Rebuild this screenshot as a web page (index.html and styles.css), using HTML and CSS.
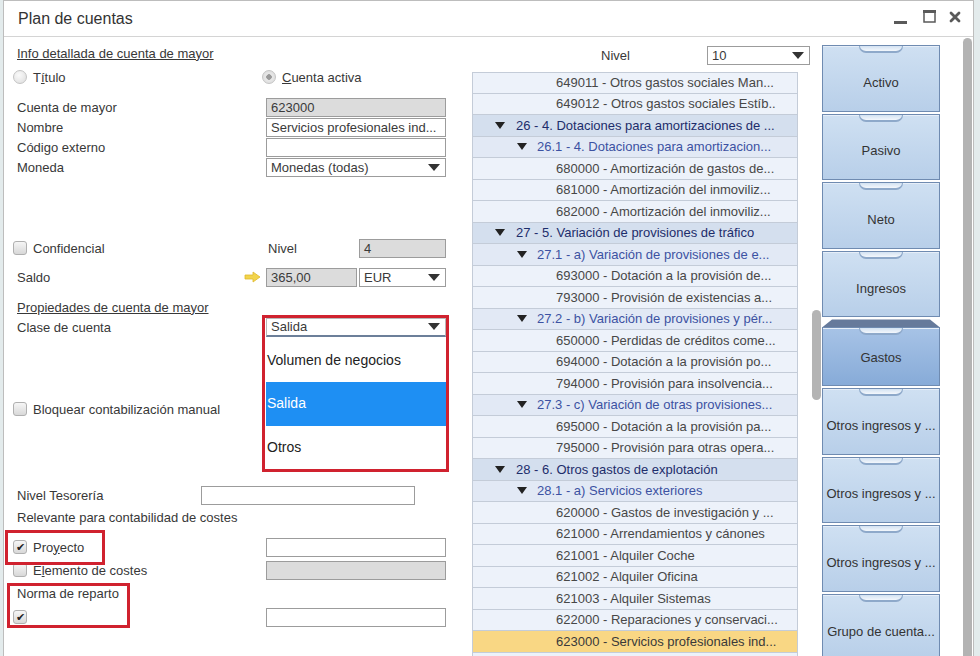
FILE: index.html
```html
<!DOCTYPE html>
<html lang="es">
<head>
    <meta charset="UTF-8">
    <title>Plan de cuentas</title>
    <link rel="stylesheet" href="styles.css">
</head>
<body>
    <div class="window">
        <div class="titlebar">
            <span class="title">Plan de cuentas</span>
            <svg class="winctl" width="80" height="35" viewBox="0 0 80 35">
                <rect x="4" y="20" width="13" height="3" fill="#5a5a5a"/>
                <rect x="34" y="10" width="11" height="11" fill="none" stroke="#5a5a5a" stroke-width="1.5"/>
                <rect x="33" y="9" width="13" height="3" fill="#5a5a5a"/>
                <path d="M61 12 L69 20 M69 12 L61 20" stroke="#5a5a5a" stroke-width="2.8" stroke-linecap="round"/>
            </svg>
        </div>
        <div class="content">
            <!-- formulario izquierdo -->
            <div class="form">
                <div class="row first"><span class="section">Info detallada de cuenta de mayor</span></div>
                <div class="row row-radio">
                    <label class="lbl opt"><span class="radio"></span>T<u>í</u>tulo</label>
                    <label class="opt"><span class="radio on"></span><u>C</u>uenta activa</label>
                </div>
                <div class="row row-account">
                    <span class="lbl">Cuenta de mayor</span>
                    <span class="inp ro">623000</span>
                </div>
                <div class="row">
                    <span class="lbl">Nombre</span>
                    <span class="inp">Servicios profesionales ind...</span>
                </div>
                <div class="row">
                    <span class="lbl">Código externo</span>
                    <span class="inp"></span>
                </div>
                <div class="row">
                    <span class="lbl">Moneda</span>
                    <span class="inp sel">Monedas (todas)<span class="caret"></span></span>
                </div>
                <div class="row row-conf">
                    <label class="lbl opt"><span class="check"></span>Confidencial</label>
                    <span class="sublbl">Nivel</span>
                    <span class="inp ro small">4</span>
                </div>
                <div class="row row-saldo">
                    <span class="lbl saldo-lbl">Saldo
                        <svg class="arrow" width="17" height="12" viewBox="0 0 17 12">
                            <path d="M1 4 H9 V1 L16 6 L9 11 V8 H1 Z" fill="#f2d44c" stroke="#e0b92c" stroke-width="0.8"/>
                        </svg>
                    </span>
                    <span class="inp ro mid">365,00</span>
                    <span class="inp sel small">EUR<span class="caret"></span></span>
                </div>
                <div class="row row-props"><span class="section">Propiedades de cuenta de mayor</span></div>
                <div class="row">
                    <span class="lbl">Clase de cuenta</span>
                    <span class="inp sel focus">Salida<span class="caret"></span>
                        <span class="dropdown">
                            <span class="opt-item">Volumen de negocios</span>
                            <span class="opt-item active">Salida</span>
                            <span class="opt-item">Otros</span>
                        </span>
                    </span>
                </div>
                <div class="row row-lock">
                    <label class="lbl opt"><span class="check"></span>Bloquear contabilización manual</label>
                </div>
                <div class="row row-treas">
                    <span class="lbl narrow">Nivel Tesorería</span>
                    <span class="inp wide"></span>
                </div>
                <div class="row row-rel">
                    <span class="lbl">Relevante para contabilidad de costes</span>
                </div>
                <div class="row row-proj">
                    <label class="lbl opt"><span class="check on">✔</span>Pro<u>y</u>ecto</label>
                    <span class="inp"></span>
                </div>
                <div class="row row-cost">
                    <label class="lbl opt"><span class="check"></span>E<u>l</u>emento de costes</label>
                    <span class="inp ro"></span>
                </div>
                <div class="row row-norm">
                    <span class="lbl">Norma de reparto</span>
                </div>
                <div class="row row-normchk">
                    <label class="lbl opt"><span class="check on">✔</span></label>
                    <span class="inp"></span>
                </div>

                <div class="mark mark-class"></div>
                <div class="mark mark-proj"></div>
                <div class="mark mark-norm"></div>
            </div>

            <!-- árbol de cuentas -->
            <div class="tree">
                <div class="tree-head">
                    <span class="lvl">Nivel</span>
                    <span class="inp sel lvl-sel">10<span class="caret"></span></span>
                </div>
                <div class="tree-body">
                    <div class="rows">
                        <div class="trow top">649011 - Otros gastos sociales Man...</div>
                        <div class="trow">649012 - Otros gastos sociales Estíb..</div>
                        <div class="trow g1"><span class="tri"></span>26 - 4. Dotaciones para amortizaciones de ...</div>
                        <div class="trow g2"><span class="tri"></span>26.1 - 4. Dotaciones para amortizacion...</div>
                        <div class="trow">680000 - Amortización de gastos de...</div>
                        <div class="trow">681000 - Amortización del inmoviliz...</div>
                        <div class="trow">682000 - Amortización del inmoviliz...</div>
                        <div class="trow g1"><span class="tri"></span>27 - 5. Variación de provisiones de tráfico</div>
                        <div class="trow g2"><span class="tri"></span>27.1 - a) Variación de provisiones de e...</div>
                        <div class="trow">693000 - Dotación a la provisión de...</div>
                        <div class="trow">793000 - Provisión de existencias a...</div>
                        <div class="trow g2"><span class="tri"></span>27.2 - b) Variación de provisiones y pér...</div>
                        <div class="trow">650000 - Perdidas de créditos come...</div>
                        <div class="trow">694000 - Dotación a la provisión po...</div>
                        <div class="trow">794000 - Provisión para insolvencia...</div>
                        <div class="trow g2"><span class="tri"></span>27.3 - c) Variación de otras provisiones...</div>
                        <div class="trow">695000 - Dotación a la provisión pa...</div>
                        <div class="trow">795000 - Provisión para otras opera...</div>
                        <div class="trow g1"><span class="tri"></span>28 - 6. Otros gastos de explotación</div>
                        <div class="trow g2"><span class="tri"></span>28.1 - a) Servicios exteriores</div>
                        <div class="trow">620000 - Gastos de investigación y ...</div>
                        <div class="trow">621000 - Arrendamientos y cánones</div>
                        <div class="trow">621001 - Alquiler Coche</div>
                        <div class="trow">621002 - Alquiler Oficina</div>
                        <div class="trow">621003 - Alquiler Sistemas</div>
                        <div class="trow">622000 - Reparaciones y conservaci...</div>
                        <div class="trow current">623000 - Servicios profesionales ind...</div>
                        <div class="trow"></div>
                    </div>
                    <div class="tscroll"><div class="tthumb"></div></div>
                </div>
            </div>

            <!-- cajones -->
            <div class="drawers">
                <div class="drawer">Activo</div>
                <div class="drawer">Pasivo</div>
                <div class="drawer">Neto</div>
                <div class="drawer">Ingresos</div>
                <div class="lip"></div>
                <div class="drawer open">Gastos</div>
                <div class="drawer">Otros ingresos y ...</div>
                <div class="drawer">Otros ingresos y ...</div>
                <div class="drawer">Otros ingresos y ...</div>
                <div class="drawer">Grupo de cuenta...</div>
            </div>

            <div class="vscroll"><div class="vthumb"></div></div>
        </div>
    </div>
</body>
</html>
```

FILE: styles.css
```css
body {
    margin: 0;
    background: #e3ebec;
    font-family: "Liberation Sans", Arial, sans-serif;
    font-size: 13px;
    color: #383838;
    overflow: hidden;
}
.window {
    margin-left: 3px;
    width: 971px;
    height: 656px;
    box-sizing: border-box;
    border: 1px solid #bdbdbd;
    border-bottom: none;
    background: #fff;
    overflow: hidden;
}
.titlebar {
    height: 35px;
    border-bottom: 1px solid #d4d4d4;
    display: flex;
    align-items: center;
    justify-content: space-between;
}
.title {
    margin-left: 14px;
    font-size: 16px;
    color: #333;
}
.winctl {
    margin-right: 3px;
}
.content {
    display: flex;
    height: 619px;
}

/* formulario */
.form {
    position: relative;
    width: 466px;
    flex: none;
    padding: 6px 0 0 13px;
    box-sizing: border-box;
}
.row {
    display: flex;
    align-items: center;
    height: 20px;
    white-space: nowrap;
}
.row-radio { margin-top: 4px; }
.row-account { margin-top: 10px; }
.row-conf { margin-top: 61px; }
.row-saldo { margin-top: 9px; }
.row-props { margin-top: 10px; }
.row-lock { margin-top: 62px; }
.row-treas { margin-top: 66px; }
.row-rel { margin-top: 2px; }
.row-proj { margin-top: 10px; }
.row-cost { margin-top: 3px; }
.row-norm { margin-top: 3px; }
.row-normchk { margin-top: 4px; }
.section {
    text-decoration: underline;
}
.lbl {
    width: 249px;
    flex: none;
}
.lbl.narrow {
    width: 184px;
}
.opt {
    display: flex;
    align-items: center;
    margin-left: -4px;
}
.lbl.opt {
    width: 253px;
}
.opt u {
    text-decoration: underline;
}
.radio {
    width: 14px;
    height: 14px;
    border-radius: 50%;
    border: 1px solid #c4c4c4;
    box-sizing: border-box;
    background: radial-gradient(circle at 40% 35%, #fafafa, #dcdcdc);
    margin-right: 6px;
}
.radio.on {
    background: radial-gradient(circle, #9a9a9a 0 2.5px, #e8e8e8 3px, #d8d8d8);
}
.check {
    width: 14px;
    height: 14px;
    border-radius: 3px;
    border: 1px solid #b0b0b0;
    box-sizing: border-box;
    background: linear-gradient(#f6f6f6, #d8d8d8);
    margin-right: 6px;
    font-size: 11px;
    line-height: 12px;
    text-align: center;
    color: #222;
}
.sublbl {
    width: 93px;
    padding-left: 2px;
    box-sizing: border-box;
    flex: none;
}
.saldo-lbl {
    display: flex;
    align-items: center;
    justify-content: space-between;
    padding-right: 5px;
    box-sizing: border-box;
}
.inp {
    position: relative;
    width: 180px;
    height: 19px;
    box-sizing: border-box;
    border: 1px solid #9c9c9c;
    background: #fff;
    padding: 0 4px;
    line-height: 17px;
    flex: none;
    overflow: visible;
    color: #3a3a3a;
}
.inp.ro {
    background: #dcdcdc;
}
.inp.small {
    width: 87px;
}
.inp.mid {
    width: 91px;
    margin-right: 2px;
}
.inp.wide {
    width: 214px;
}
.sel {
    display: flex;
    justify-content: space-between;
    align-items: center;
}
.sel.focus {
    border-color: #b8b8b8;
    border-bottom: 2px solid #6c7f99;
}
.caret {
    width: 0;
    height: 0;
    border-left: 6px solid transparent;
    border-right: 6px solid transparent;
    border-top: 7px solid #333;
    margin-right: 1px;
}
.dropdown {
    position: absolute;
    left: -1px;
    top: 20px;
    width: 181px;
    display: flex;
    flex-direction: column;
    background: #fff;
    z-index: 2;
}
.opt-item {
    height: 43.6px;
    line-height: 43.6px;
    padding-left: 1px;
    font-size: 14px;
    color: #222;
}
.opt-item.active {
    background: #1e8ff3;
    color: #fff;
}
.mark {
    position: absolute;
    border: 3px solid #d0222f;
    box-sizing: border-box;
    z-index: 3;
}
.mark-class {
    left: 258px;
    top: 278px;
    width: 187px;
    height: 157px;
}
.mark-proj {
    left: 1px;
    top: 493px;
    width: 100px;
    height: 35px;
}
.mark-norm {
    left: 3px;
    top: 546px;
    width: 123px;
    height: 45px;
}

/* árbol */
.tree {
    width: 352px;
    flex: none;
}
.tree-head {
    height: 35px;
    box-sizing: border-box;
    padding-bottom: 7px;
    display: flex;
    align-items: flex-end;
}
.lvl {
    margin-left: 131px;
    width: 106px;
    line-height: 19px;
}
.inp.lvl-sel {
    width: 103px;
}
.tree-body {
    display: flex;
}
.rows {
    width: 326px;
    margin-left: 2px;
    flex: none;
}
.trow {
    height: 21.5px;
    box-sizing: border-box;
    border: 1px solid #c4ccd8;
    border-top: none;
    background: #edf2fa;
    display: flex;
    align-items: center;
    padding-left: 83px;
    white-space: nowrap;
    overflow: hidden;
    color: #474747;
}
.trow.top {
    border-top: 1px solid #c4ccd8;
}
.trow.g1 {
    background: #d4dfee;
    padding-left: 22px;
    color: #1d2d6b;
}
.trow.g2 {
    background: #e2e9f5;
    padding-left: 44px;
    color: #3c52a2;
}
.trow.current {
    background: #f9d784;
    color: #3a3a3a;
}
.tri {
    width: 0;
    height: 0;
    border-left: 5px solid transparent;
    border-right: 5px solid transparent;
    border-top: 7px solid #222;
    margin-right: 11px;
}
.trow.g2 .tri {
    margin-right: 10px;
}
.tscroll {
    width: 24px;
    flex: none;
}
.tthumb {
    margin: 238px 0 0 14px;
    width: 9px;
    height: 90px;
    border-radius: 5px;
    background: #b4b4b4;
}

/* cajones */
.drawers {
    width: 118px;
    flex: none;
    padding-top: 8px;
}
.drawer {
    position: relative;
    height: 66.6px;
    margin-bottom: 2px;
    box-sizing: border-box;
    border: 1px solid #6f8bb1;
    background: linear-gradient(#cfe0f2, #b8cfe9);
    box-shadow: inset 0 1px 0 #e6eef8;
    display: flex;
    align-items: center;
    justify-content: center;
    padding-top: 8px;
    white-space: nowrap;
    overflow: hidden;
    color: #333;
}
.drawer::before {
    content: "";
    position: absolute;
    top: 0;
    left: 36px;
    width: 44px;
    height: 7px;
    box-sizing: border-box;
    border: 1px solid #8ea9ca;
    border-top: none;
    border-bottom-width: 2px;
    border-radius: 0 0 10px 10px;
    background: linear-gradient(#d3e2f2, #f3f7fc);
}
.lip {
    height: 8px;
    background: #667a9b;
    clip-path: polygon(10px 0, 108px 0, 118px 100%, 0 100%);
}
.drawer.open {
    height: 58.6px;
    padding-top: 2px;
    background: linear-gradient(#a7c3e6, #87abd8);
}
.vscroll {
    width: 9px;
    margin-left: 23px;
    flex: none;
    padding-top: 1px;
}
.vthumb {
    height: 640px;
    border-radius: 5px;
    background: #b3b3b3;
}
```
